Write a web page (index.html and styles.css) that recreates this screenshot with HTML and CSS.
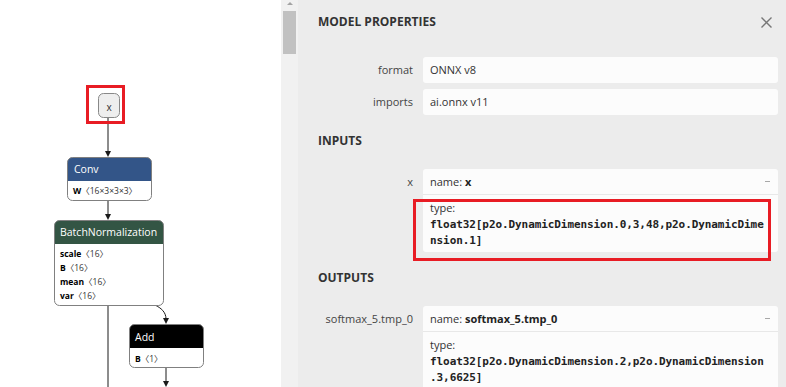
FILE: index.html
```html
<!DOCTYPE html>
<html lang="en">
<head>
    <meta charset="UTF-8">
    <title>Model Properties</title>
    <link rel="stylesheet" href="styles.css">
</head>
<body>

    <div class="graph-view">
        <svg class="graph" width="281" height="387" viewBox="0 0 281 387">
            <!-- edges -->
            <g class="edges">
                <line x1="108" y1="117" x2="108" y2="152"/>
                <polygon points="105,151 111,151 108,157"/>
                <line x1="108" y1="200" x2="108" y2="215"/>
                <polygon points="105,214 111,214 108,220"/>
                <path d="M155,305 C161,308 166,312 166,319" fill="none"/>
                <polygon points="163,318 169,318 166,324"/>
                <line x1="108" y1="305" x2="108" y2="387"/>
                <line x1="166" y1="368" x2="166" y2="382"/>
                <polygon points="163,381 169,381 166,387"/>
            </g>

            <!-- input node -->
            <rect class="input-node" x="98.5" y="93.5" width="21" height="24" rx="5"/>
            <text class="input-label" x="109" y="111" text-anchor="middle">x</text>
            <rect class="mark" x="87.5" y="86.5" width="36" height="36"/>

            <!-- Conv -->
            <rect class="node-body" x="67.5" y="157.5" width="84" height="43" rx="5"/>
            <path class="head-conv" d="M67.5,181 V162.5 a5,5 0 0 1 5,-5 H146.5 a5,5 0 0 1 5,5 V181 Z"/>
            <rect class="node-frame" x="67.5" y="157.5" width="84" height="43" rx="5"/>
            <text class="node-title" x="74" y="173">Conv</text>
            <text class="node-attr" x="73" y="194"><tspan class="attr-name">W</tspan>〈16×3×3×3〉</text>

            <!-- BatchNormalization -->
            <rect class="node-body" x="54.5" y="220.5" width="109" height="85" rx="5"/>
            <path class="head-norm" d="M54.5,244 V225.5 a5,5 0 0 1 5,-5 H158.5 a5,5 0 0 1 5,5 V244 Z"/>
            <rect class="node-frame" x="54.5" y="220.5" width="109" height="85" rx="5"/>
            <text class="node-title" x="60" y="236">BatchNormalization</text>
            <text class="node-attr" x="60" y="257"><tspan class="attr-name">scale</tspan>〈16〉</text>
            <text class="node-attr" x="60" y="271"><tspan class="attr-name">B</tspan>〈16〉</text>
            <text class="node-attr" x="60" y="285"><tspan class="attr-name">mean</tspan>〈16〉</text>
            <text class="node-attr" x="60" y="299"><tspan class="attr-name">var</tspan>〈16〉</text>

            <!-- Add -->
            <rect class="node-body" x="129.5" y="324.5" width="74" height="43" rx="5"/>
            <path class="head-add" d="M129.5,348 V329.5 a5,5 0 0 1 5,-5 H198.5 a5,5 0 0 1 5,5 V348 Z"/>
            <rect class="node-frame" x="129.5" y="324.5" width="74" height="43" rx="5"/>
            <text class="node-title" x="135" y="341">Add</text>
            <text class="node-attr" x="135" y="362"><tspan class="attr-name">B</tspan>〈1〉</text>
        </svg>
    </div>

    <div class="sidebar">
        <div class="scrollbar">
            <span class="scroll-up"></span>
            <span class="scroll-thumb"></span>
        </div>

        <div class="sidebar-content">
            <div class="sidebar-header">
                <span class="sidebar-title">MODEL PROPERTIES</span>
                <svg class="close" width="11" height="11" viewBox="0 0 11 11">
                    <path d="M0.5,0.5 L10.5,10.5 M10.5,0.5 L0.5,10.5"/>
                </svg>
            </div>

            <div class="props">
                <div class="prop">
                    <div class="prop-name">format</div>
                    <div class="prop-value"><div class="value-line">ONNX v8</div></div>
                </div>
                <div class="prop">
                    <div class="prop-name">imports</div>
                    <div class="prop-value"><div class="value-line">ai.onnx v11</div></div>
                </div>
            </div>

            <div class="section-title">INPUTS</div>
            <div class="props">
                <div class="prop">
                    <div class="prop-name">x</div>
                    <div class="prop-value">
                        <div class="value-name">name: <b>x</b><span class="collapse"></span></div>
                        <div class="value-type">
                            <div>type:</div>
                            <code><span>float32[p2o.DynamicDimension.0,3,48,p2o.DynamicDime</span><span>nsion.1]</span></code>
                        </div>
                        <div class="highlight"></div>
                    </div>
                </div>
            </div>

            <div class="section-title">OUTPUTS</div>
            <div class="props">
                <div class="prop">
                    <div class="prop-name">softmax_5.tmp_0</div>
                    <div class="prop-value">
                        <div class="value-name">name: <b>softmax_5.tmp_0</b><span class="collapse"></span></div>
                        <div class="value-type">
                            <div>type:</div>
                            <code><span>float32[p2o.DynamicDimension.2,p2o.DynamicDimension</span><span>.3,6625]</span></code>
                        </div>
                    </div>
                </div>
            </div>
        </div>
    </div>

</body>
</html>
```

FILE: styles.css
```css
body {
    margin: 0;
    height: 100vh;
    overflow: hidden;
    display: flex;
    background: #ffffff;
    font-family: 'Open Sans', sans-serif;
    color: #333;
}

/* graph */

.graph-view {
    width: 281px;
    flex: none;
}

.graph {
    display: block;
    font-family: 'Open Sans', 'Noto Sans CJK SC', sans-serif;
}

.edges line,
.edges path {
    stroke: #1a1a1a;
    stroke-width: 1;
}

.edges polygon {
    fill: #1a1a1a;
}

.input-node {
    fill: #eeeeee;
    stroke: #888888;
    stroke-width: 1;
}

.input-label {
    font-size: 10px;
    fill: #333;
}

.mark {
    fill: none;
    stroke: #e81c24;
    stroke-width: 3;
}

.node-body {
    fill: #ffffff;
}

.node-frame {
    fill: none;
    stroke: #808080;
    stroke-width: 1;
}

.head-conv {
    fill: #335588;
}

.head-norm {
    fill: #335544;
}

.head-add {
    fill: #000000;
}

.node-title {
    font-size: 10.5px;
    fill: #ffffff;
}

.node-attr {
    font-size: 8.5px;
    fill: #333;
}

.attr-name {
    font-weight: bold;
    fill: #000;
}

/* sidebar */

.sidebar {
    flex: 1;
    display: flex;
    background: #ececec;
    min-width: 0;
}

.scrollbar {
    width: 17px;
    flex: none;
    background: #f1f1f1;
    display: flex;
    flex-direction: column;
    align-items: center;
    padding-top: 2px;
}

.scroll-up {
    width: 0;
    height: 0;
    border-left: 3.5px solid transparent;
    border-right: 3.5px solid transparent;
    border-bottom: 3px solid #a3a3a3;
}

.scroll-thumb {
    width: 13px;
    height: 43px;
    margin-top: 6px;
    background: #c1c1c1;
}

.sidebar-content {
    flex: 1;
    min-width: 0;
    padding: 12px 8px 0 20px;
}

.sidebar-header {
    display: flex;
    justify-content: space-between;
    align-items: center;
    height: 20px;
}

.sidebar-title,
.section-title {
    font-size: 12px;
    font-weight: bold;
    line-height: 20px;
    color: #333;
}

.close {
    margin-right: 6px;
    margin-top: 1px;
}

.close path {
    stroke: #777;
    stroke-width: 1.4;
    fill: none;
}

.props {
    margin-top: 25px;
    display: flex;
    flex-direction: column;
    gap: 6px;
}

.section-title {
    margin-top: 16px;
}

.section-title + .props {
    margin-top: 18px;
}

.prop {
    display: grid;
    grid-template-columns: 95px 1fr;
    column-gap: 10px;
}

.prop-name {
    text-align: right;
    font-size: 11px;
    line-height: 26px;
    color: #444;
    white-space: nowrap;
}

.prop-value {
    position: relative;
    background: #fcfcfc;
    border-radius: 3px;
    font-size: 11px;
    color: #333;
}

.value-line {
    padding: 0 7px;
    line-height: 26px;
}

.value-name {
    position: relative;
    padding: 0 7px;
    line-height: 25px;
    border-bottom: 1px solid #e8e8e8;
}

.value-name b {
    font-weight: bold;
    color: #222;
}

.collapse {
    position: absolute;
    right: 8px;
    top: 12px;
    width: 5px;
    height: 1px;
    background: #a8a8a8;
}

.value-type {
    padding: 5px 7px 3px;
    line-height: 16px;
}

.value-type code {
    display: block;
    margin-top: 1px;
    font-family: 'DejaVu Sans Mono', monospace;
    font-size: 11px;
    letter-spacing: -0.08px;
    font-weight: bold;
    color: #222;
    white-space: nowrap;
}

.value-type code span {
    display: block;
}

.highlight {
    position: absolute;
    left: -10px;
    right: 7px;
    top: 30px;
    height: 56px;
    border: 3px solid #e81c24;
}
```
